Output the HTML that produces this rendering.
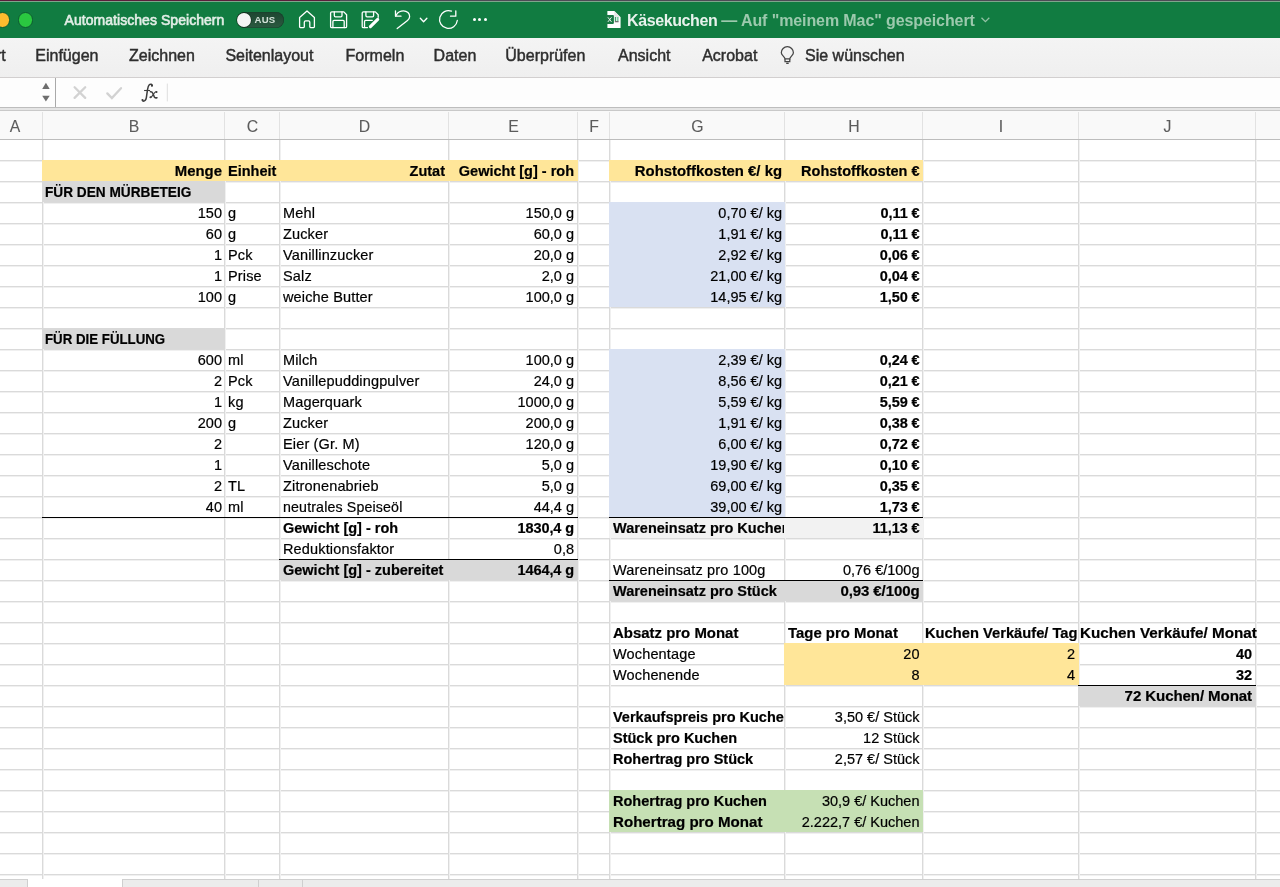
<!DOCTYPE html>
<html><head><meta charset="utf-8"><title>Käsekuchen</title>
<style>
*{box-sizing:border-box}
html,body{margin:0;padding:0}
body{width:1280px;height:887px;overflow:hidden;position:relative;background:#fff;font-family:"Liberation Sans",sans-serif;color:#000;-webkit-font-smoothing:antialiased}
.a{position:absolute}
.t{position:absolute;white-space:nowrap;font-size:14.5px;line-height:20px;height:20px;overflow:hidden;-webkit-text-stroke:0.2px #000;letter-spacing:0.15px}
.b{font-weight:bold;letter-spacing:0}
.r{text-align:right}
.hl{position:absolute;height:1px}
.vl{position:absolute;width:1px}
.tab{position:absolute;top:44px;font-size:16px;line-height:24px;color:#2e2e2e;white-space:nowrap;-webkit-text-stroke:0.45px #2e2e2e}
.ch{position:absolute;top:114.6px;height:24px;line-height:24px;font-size:15.8px;color:#5c5c5c;text-align:center;-webkit-text-stroke:0.1px #5c5c5c}
</style></head><body>
<div style="position:absolute;left:0;top:0;width:1280px;height:887px;overflow:hidden;will-change:transform">

<div class="a" style="left:0;top:0;width:1280px;height:38px;background:#117c41"></div>
<div class="a" style="left:0;top:0;width:340px;height:1px;background:#5a1f3a"></div>
<div class="a" style="left:340px;top:0;width:940px;height:1px;background:#4d4b55"></div>
<div class="a" style="left:0;top:1px;width:1280px;height:1px;background:#7fa58c"></div>
<div class="a" style="left:-5.4px;top:11.9px;width:15.8px;height:15.8px;border-radius:50%;background:#febc2e;border:1px solid #0d5a30"></div>
<div class="a" style="left:17.7px;top:11.9px;width:15.8px;height:15.8px;border-radius:50%;background:#2ac840;border:1px solid #0d5a30"></div>
<div class="a" style="left:64.5px;top:9.5px;font-size:14px;line-height:20px;color:#e3eee7;white-space:nowrap;letter-spacing:0.05px;-webkit-text-stroke:0.6px #e3eee7">Automatisches Speichern</div>
<div class="a" style="left:236.5px;top:12.2px;width:47.3px;height:15.6px;border-radius:8px;background:linear-gradient(#1d4530,#2b5a40);box-shadow:inset 0 0 0 0.6px #16402a"></div>
<div class="a" style="left:236.8px;top:12.8px;width:14.2px;height:14.2px;border-radius:50%;background:#f4f4f4;box-shadow:0 0 0 0.7px rgba(10,40,20,.8)"></div>
<div class="a" style="left:254.6px;top:12.8px;font-size:9.6px;line-height:14px;font-weight:bold;color:#d3e2d8;white-space:nowrap;letter-spacing:0.15px">AUS</div>
<svg class="a" style="left:290px;top:5px" width="210" height="30" viewBox="290 5 210 30" fill="none" stroke="#fff" stroke-width="1.3" stroke-linejoin="round" stroke-linecap="round">
<path d="M299.6 26.8 V17.6 L307 10.9 L314.4 17.6 V26.8 Q314.4 27.6 313.6 27.6 H310.6 Q309.8 27.6 309.8 26.8 V22.2 Q309.8 20.9 308.5 20.9 H305.6 Q304.3 20.9 304.3 22.2 V26.8 Q304.3 27.6 303.5 27.6 H300.4 Q299.6 27.6 299.6 26.8 Z"/>
<path d="M331.8 11.9 H343.8 L346.6 14.7 V26.4 Q346.6 27.6 345.4 27.6 H331.8 Q330.6 27.6 330.6 26.4 V13.1 Q330.6 11.9 331.8 11.9 Z"/>
<path d="M334.3 11.9 V15.6 Q334.3 16.8 335.5 16.8 H340.8 Q342 16.8 342 15.6 V11.9"/>
<path d="M332.9 27.6 V21.4 Q332.9 20.3 334 20.3 H343.1 Q344.2 20.3 344.2 21.4 V27.6"/>
<path d="M367.5 27.6 H363.4 Q362.2 27.6 362.2 26.4 V13.1 Q362.2 11.9 363.4 11.9 H375.4 L378.2 14.7 V17.3"/>
<path d="M365.9 11.9 V15.6 Q365.9 16.8 367.1 16.8 H372.4 Q373.6 16.8 373.6 15.6 V11.9"/>
<path d="M364.5 27.6 V21.4 Q364.5 20.3 365.6 20.3 H372.3"/>
<path d="M370.4 26.7 L377.7 19.4" stroke-width="3.1"/>
<path d="M395.5 10.8 V16.2 H401"/>
<path d="M395.7 16 C398 10.5 404.5 9.5 408 12.5 C410.5 15 410 18.5 407.5 20.5 L397.2 28.5"/>
<path d="M420.3 18.2 L423.6 21.8 L426.9 18.2"/>
<path d="M457.3 20.5 A8.9 8.9 0 1 1 451.5 11.1"/>
<path d="M455.8 10.8 V16.2 H450.5"/>
</svg>
<div class="a" style="left:472.5px;top:18.2px;width:3.2px;height:3.2px;border-radius:50%;background:#fff"></div>
<div class="a" style="left:478.3px;top:18.2px;width:3.2px;height:3.2px;border-radius:50%;background:#fff"></div>
<div class="a" style="left:484px;top:18.2px;width:3.2px;height:3.2px;border-radius:50%;background:#fff"></div>
<svg class="a" style="left:604px;top:9px" width="20" height="22" viewBox="604 9 20 22">
<path d="M607.4 11.1 H614.3 L620.6 17.2 V28 H607.4 Z" fill="#fff"/>
<path d="M614.3 11.1 V17.2 H620.6" fill="#e6e6e6"/>
<rect x="605.6" y="15.1" width="8.3" height="8.8" rx="0.8" fill="#1a7a45"/>
<path d="M607.9 17.3 L611.5 21.9 M611.5 17.3 L607.9 21.9" stroke="#e8f3ec" stroke-width="1"/>
<rect x="614.8" y="17" width="1.4" height="4" fill="#3fa36d"/><rect x="617" y="17" width="1.6" height="4" fill="#7ccaa0"/>
<rect x="614.8" y="21.3" width="3.8" height="0.9" fill="#333"/>
</svg>
<div class="a" style="left:627px;top:9.7px;font-size:16px;line-height:22px;font-weight:bold;color:#e8f2ec;white-space:nowrap;letter-spacing:-0.4px">Käsekuchen <span style="color:#9cc9ad;letter-spacing:-0.1px">— Auf "meinem Mac" gespeichert</span></div>
<svg class="a" style="left:976px;top:15px" width="16" height="10" viewBox="0 0 16 10" fill="none" stroke="#93c2a5" stroke-width="1.3"><path d="M5.5 2.8 L9.4 6.7 L13.3 2.8"/></svg>
<div class="a" style="left:0;top:38px;width:1280px;height:39px;background:linear-gradient(#f4f4f4,#efefef)"></div>
<div class="a" style="left:0;top:77px;width:1280px;height:1px;background:#d2cfcf"></div>
<div class="tab" style="left:-4px">rt</div>
<div class="tab" style="left:35.3px">Einfügen</div>
<div class="tab" style="left:129px">Zeichnen</div>
<div class="tab" style="left:225.4px">Seitenlayout</div>
<div class="tab" style="left:345.6px">Formeln</div>
<div class="tab" style="left:433.6px">Daten</div>
<div class="tab" style="left:505.3px">Überprüfen</div>
<div class="tab" style="left:618px">Ansicht</div>
<div class="tab" style="left:702.2px">Acrobat</div>
<div class="tab" style="left:805px">Sie wünschen</div>
<svg class="a" style="left:778px;top:46px" width="18" height="20" viewBox="778 46 18 20" fill="none" stroke="#444" stroke-width="1.25">
<path d="M785 58.9 C785 56.8 781.3 55.3 781.3 52.8 A6.05 6.05 0 0 1 793.4 52.8 C793.4 55.3 789.8 56.8 789.8 58.9 Z"/>
<path d="M785 58.9 V61.5 H789.8 V58.9"/>
<path d="M786.2 63.3 H788.7" stroke-width="1.4"/>
</svg>
<div class="a" style="left:0;top:78px;width:1280px;height:29px;background:#fdfdfd"></div>
<div class="a" style="left:55px;top:78px;width:1px;height:29px;background:#a9a9a9"></div>
<svg class="a" style="left:38px;top:80px" width="16" height="24" viewBox="38 80 16 24"><path d="M42.2 88.9 L45.9 82.8 L49.7 88.9 Z" fill="#6e6e6e"/><path d="M42.2 95.8 L49.7 95.8 L45.9 101.6 Z" fill="#6e6e6e"/></svg>
<svg class="a" style="left:70px;top:80px" width="100" height="24" viewBox="70 80 100 24" fill="none" stroke-linecap="round">
<path d="M74.6 87.3 L85.2 97.9 M85.2 87.3 L74.6 97.9" stroke="#d2d2d2" stroke-width="2.3"/>
<path d="M107.3 93.4 L111.9 98 L121 88.2" stroke="#d2d2d2" stroke-width="2.3"/>
<line x1="167.3" y1="84" x2="167.3" y2="101" stroke="#dedede" stroke-width="1"/>
</svg>
<svg class="a" style="left:136px;top:80px" width="28" height="24" viewBox="136 80 28 24" fill="none" stroke="#3d3d3d" stroke-linecap="round">
<path d="M152.3 85.6 C152.2 84.2 150.6 83.8 149.4 84.6 C148.3 85.4 147.9 87.2 147.5 89.6 L146.4 97.4 C146 100 144.7 101.3 142.9 101.1" stroke-width="1.5"/>
<circle cx="151.9" cy="85.8" r="1.05" fill="#3d3d3d" stroke="none"/>
<circle cx="142.5" cy="100.1" r="1.1" fill="#3d3d3d" stroke="none"/>
<path d="M144.1 90.5 H150.1" stroke-width="1.1" stroke-linecap="butt"/>
<path d="M150.4 91.7 C151.7 91.4 152.3 92.1 152.8 93.3 L154.3 96.9 C154.7 97.8 155.6 98.1 157 97.7" stroke-width="1.5"/>
<path d="M156.6 91.9 C155.8 91.6 155.1 92.1 154.4 93 L151.9 96.4 C151.4 97.1 150.8 97.5 150.3 97.3" stroke-width="1.1"/>
<circle cx="156.5" cy="92" r="1" fill="#3d3d3d" stroke="none"/>
<circle cx="150.5" cy="97.2" r="1" fill="#3d3d3d" stroke="none"/>
</svg>
<div class="a" style="left:0;top:107px;width:1280px;height:4px;background:#e5e5e5;border-top:1px solid #bdbdbd;border-bottom:1px solid #c9c9c9"></div>
<div class="a" style="left:0;top:111px;width:1280px;height:28px;background:#f9f9f9"></div>
<div class="a" style="left:0;top:139px;width:1280px;height:1px;background:#bdbdbd"></div>
<div class="a" style="left:42px;top:112px;width:1px;height:27px;background:#e2e2e2"></div>
<div class="ch" style="left:0px;width:30px">A</div>
<div class="a" style="left:224px;top:112px;width:1px;height:27px;background:#e2e2e2"></div>
<div class="ch" style="left:43px;width:182px">B</div>
<div class="a" style="left:279px;top:112px;width:1px;height:27px;background:#e2e2e2"></div>
<div class="ch" style="left:225px;width:55px">C</div>
<div class="a" style="left:448px;top:112px;width:1px;height:27px;background:#e2e2e2"></div>
<div class="ch" style="left:280px;width:169px">D</div>
<div class="a" style="left:577px;top:112px;width:1px;height:27px;background:#e2e2e2"></div>
<div class="ch" style="left:449px;width:129px">E</div>
<div class="a" style="left:609px;top:112px;width:1px;height:27px;background:#e2e2e2"></div>
<div class="ch" style="left:578px;width:32px">F</div>
<div class="a" style="left:784px;top:112px;width:1px;height:27px;background:#e2e2e2"></div>
<div class="ch" style="left:610px;width:175px">G</div>
<div class="a" style="left:922px;top:112px;width:1px;height:27px;background:#e2e2e2"></div>
<div class="ch" style="left:785px;width:138px">H</div>
<div class="a" style="left:1078px;top:112px;width:1px;height:27px;background:#e2e2e2"></div>
<div class="ch" style="left:923px;width:156px">I</div>
<div class="a" style="left:1255px;top:112px;width:1px;height:27px;background:#e2e2e2"></div>
<div class="ch" style="left:1079px;width:177px">J</div>
<div class="hl" style="left:0;top:160px;width:1280px;background:#dadada;box-shadow:0 1px 0 #f0f0f0"></div>
<div class="hl" style="left:0;top:181px;width:1280px;background:#dadada;box-shadow:0 1px 0 #f0f0f0"></div>
<div class="hl" style="left:0;top:202px;width:1280px;background:#dadada;box-shadow:0 1px 0 #f0f0f0"></div>
<div class="hl" style="left:0;top:223px;width:1280px;background:#dadada;box-shadow:0 1px 0 #f0f0f0"></div>
<div class="hl" style="left:0;top:244px;width:1280px;background:#dadada;box-shadow:0 1px 0 #f0f0f0"></div>
<div class="hl" style="left:0;top:265px;width:1280px;background:#dadada;box-shadow:0 1px 0 #f0f0f0"></div>
<div class="hl" style="left:0;top:286px;width:1280px;background:#dadada;box-shadow:0 1px 0 #f0f0f0"></div>
<div class="hl" style="left:0;top:307px;width:1280px;background:#dadada;box-shadow:0 1px 0 #f0f0f0"></div>
<div class="hl" style="left:0;top:328px;width:1280px;background:#dadada;box-shadow:0 1px 0 #f0f0f0"></div>
<div class="hl" style="left:0;top:349px;width:1280px;background:#dadada;box-shadow:0 1px 0 #f0f0f0"></div>
<div class="hl" style="left:0;top:370px;width:1280px;background:#dadada;box-shadow:0 1px 0 #f0f0f0"></div>
<div class="hl" style="left:0;top:391px;width:1280px;background:#dadada;box-shadow:0 1px 0 #f0f0f0"></div>
<div class="hl" style="left:0;top:412px;width:1280px;background:#dadada;box-shadow:0 1px 0 #f0f0f0"></div>
<div class="hl" style="left:0;top:433px;width:1280px;background:#dadada;box-shadow:0 1px 0 #f0f0f0"></div>
<div class="hl" style="left:0;top:454px;width:1280px;background:#dadada;box-shadow:0 1px 0 #f0f0f0"></div>
<div class="hl" style="left:0;top:475px;width:1280px;background:#dadada;box-shadow:0 1px 0 #f0f0f0"></div>
<div class="hl" style="left:0;top:496px;width:1280px;background:#dadada;box-shadow:0 1px 0 #f0f0f0"></div>
<div class="hl" style="left:0;top:517px;width:1280px;background:#dadada;box-shadow:0 1px 0 #f0f0f0"></div>
<div class="hl" style="left:0;top:538px;width:1280px;background:#dadada;box-shadow:0 1px 0 #f0f0f0"></div>
<div class="hl" style="left:0;top:559px;width:1280px;background:#dadada;box-shadow:0 1px 0 #f0f0f0"></div>
<div class="hl" style="left:0;top:580px;width:1280px;background:#dadada;box-shadow:0 1px 0 #f0f0f0"></div>
<div class="hl" style="left:0;top:601px;width:1280px;background:#dadada;box-shadow:0 1px 0 #f0f0f0"></div>
<div class="hl" style="left:0;top:622px;width:1280px;background:#dadada;box-shadow:0 1px 0 #f0f0f0"></div>
<div class="hl" style="left:0;top:643px;width:1280px;background:#dadada;box-shadow:0 1px 0 #f0f0f0"></div>
<div class="hl" style="left:0;top:664px;width:1280px;background:#dadada;box-shadow:0 1px 0 #f0f0f0"></div>
<div class="hl" style="left:0;top:685px;width:1280px;background:#dadada;box-shadow:0 1px 0 #f0f0f0"></div>
<div class="hl" style="left:0;top:706px;width:1280px;background:#dadada;box-shadow:0 1px 0 #f0f0f0"></div>
<div class="hl" style="left:0;top:727px;width:1280px;background:#dadada;box-shadow:0 1px 0 #f0f0f0"></div>
<div class="hl" style="left:0;top:748px;width:1280px;background:#dadada;box-shadow:0 1px 0 #f0f0f0"></div>
<div class="hl" style="left:0;top:769px;width:1280px;background:#dadada;box-shadow:0 1px 0 #f0f0f0"></div>
<div class="hl" style="left:0;top:790px;width:1280px;background:#dadada;box-shadow:0 1px 0 #f0f0f0"></div>
<div class="hl" style="left:0;top:811px;width:1280px;background:#dadada;box-shadow:0 1px 0 #f0f0f0"></div>
<div class="hl" style="left:0;top:832px;width:1280px;background:#dadada;box-shadow:0 1px 0 #f0f0f0"></div>
<div class="hl" style="left:0;top:853px;width:1280px;background:#dadada;box-shadow:0 1px 0 #f0f0f0"></div>
<div class="hl" style="left:0;top:874px;width:1280px;background:#dadada;box-shadow:0 1px 0 #f0f0f0"></div>
<div class="vl" style="left:42px;top:140px;height:739px;background:#dadada;box-shadow:1px 0 0 #f0f0f0"></div>
<div class="vl" style="left:224px;top:140px;height:739px;background:#dadada;box-shadow:1px 0 0 #f0f0f0"></div>
<div class="vl" style="left:279px;top:140px;height:739px;background:#dadada;box-shadow:1px 0 0 #f0f0f0"></div>
<div class="vl" style="left:448px;top:140px;height:739px;background:#dadada;box-shadow:1px 0 0 #f0f0f0"></div>
<div class="vl" style="left:577px;top:140px;height:739px;background:#dadada;box-shadow:1px 0 0 #f0f0f0"></div>
<div class="vl" style="left:609px;top:140px;height:739px;background:#dadada;box-shadow:1px 0 0 #f0f0f0"></div>
<div class="vl" style="left:784px;top:140px;height:739px;background:#dadada;box-shadow:1px 0 0 #f0f0f0"></div>
<div class="vl" style="left:922px;top:140px;height:739px;background:#dadada;box-shadow:1px 0 0 #f0f0f0"></div>
<div class="vl" style="left:1078px;top:140px;height:739px;background:#dadada;box-shadow:1px 0 0 #f0f0f0"></div>
<div class="vl" style="left:1255px;top:140px;height:739px;background:#dadada;box-shadow:1px 0 0 #f0f0f0"></div>
<div class="a" style="left:42px;top:160px;width:536px;height:21px;background:#ffe699"></div>
<div class="a" style="left:609px;top:160px;width:314px;height:21px;background:#ffe699"></div>
<div class="a" style="left:42px;top:181px;width:183px;height:21px;background:#d9d9d9"></div>
<div class="a" style="left:42px;top:328px;width:183px;height:21px;background:#d9d9d9"></div>
<div class="a" style="left:609px;top:202px;width:176px;height:105px;background:#d9e1f2"></div>
<div class="a" style="left:609px;top:349px;width:176px;height:168px;background:#d9e1f2"></div>
<div class="a" style="left:609px;top:517px;width:314px;height:21px;background:#f2f2f2"></div>
<div class="a" style="left:279px;top:559px;width:299px;height:21px;background:#d9d9d9"></div>
<div class="a" style="left:609px;top:580px;width:314px;height:21px;background:#d9d9d9"></div>
<div class="a" style="left:784px;top:643px;width:295px;height:42px;background:#ffe699"></div>
<div class="a" style="left:1078px;top:685px;width:178px;height:21px;background:#d9d9d9"></div>
<div class="a" style="left:609px;top:790px;width:314px;height:42px;background:#c6e0b4"></div>
<div class="hl" style="left:42px;top:517px;width:536px;background:#000"></div>
<div class="hl" style="left:609px;top:517px;width:314px;background:#000"></div>
<div class="hl" style="left:279px;top:559px;width:299px;background:#000"></div>
<div class="hl" style="left:609px;top:580px;width:314px;background:#000"></div>
<div class="hl" style="left:1078px;top:685px;width:178px;background:#000"></div>
<div class="t b r" style="left:43px;width:179px;top:161px;transform:scaleX(1.0270);transform-origin:100% 0">Menge</div>
<div class="t b" style="left:228px;width:400px;top:161px">Einheit</div>
<div class="t b r" style="left:280px;width:165px;top:161px">Zutat</div>
<div class="t b r" style="left:449px;width:125px;top:161px">Gewicht [g] - roh</div>
<div class="t b r" style="left:610px;width:172px;top:161px;transform:scaleX(1.0260);transform-origin:100% 0">Rohstoffkosten €/ kg</div>
<div class="t b r" style="left:785px;width:134.5px;top:161px">Rohstoffkosten €</div>
<div class="t b" style="left:45px;width:400.00px;top:182px;transform:scaleX(0.9416);transform-origin:0 0">FÜR DEN MÜRBETEIG</div>
<div class="t r" style="left:43px;width:179px;top:203px;letter-spacing:0px">150</div>
<div class="t" style="left:228px;width:400px;top:203px">g</div>
<div class="t" style="left:283px;width:400px;top:203px">Mehl</div>
<div class="t r" style="left:449px;width:125px;top:203px;letter-spacing:0px">150,0 g</div>
<div class="t r" style="left:610px;width:172px;top:203px;letter-spacing:0px">0,70 €/ kg</div>
<div class="t b r" style="left:785px;width:134.5px;top:203px;letter-spacing:-0.1px">0,11 €</div>
<div class="t r" style="left:43px;width:179px;top:224px;letter-spacing:0px">60</div>
<div class="t" style="left:228px;width:400px;top:224px">g</div>
<div class="t" style="left:283px;width:400px;top:224px">Zucker</div>
<div class="t r" style="left:449px;width:125px;top:224px;letter-spacing:0px">60,0 g</div>
<div class="t r" style="left:610px;width:172px;top:224px;letter-spacing:0px">1,91 €/ kg</div>
<div class="t b r" style="left:785px;width:134.5px;top:224px;letter-spacing:-0.1px">0,11 €</div>
<div class="t r" style="left:43px;width:179px;top:245px;letter-spacing:0px">1</div>
<div class="t" style="left:228px;width:400px;top:245px">Pck</div>
<div class="t" style="left:283px;width:400px;top:245px">Vanillinzucker</div>
<div class="t r" style="left:449px;width:125px;top:245px;letter-spacing:0px">20,0 g</div>
<div class="t r" style="left:610px;width:172px;top:245px;letter-spacing:0px">2,92 €/ kg</div>
<div class="t b r" style="left:785px;width:134.5px;top:245px;letter-spacing:-0.1px">0,06 €</div>
<div class="t r" style="left:43px;width:179px;top:266px;letter-spacing:0px">1</div>
<div class="t" style="left:228px;width:400px;top:266px">Prise</div>
<div class="t" style="left:283px;width:400px;top:266px">Salz</div>
<div class="t r" style="left:449px;width:125px;top:266px;letter-spacing:0px">2,0 g</div>
<div class="t r" style="left:610px;width:172px;top:266px;letter-spacing:0px">21,00 €/ kg</div>
<div class="t b r" style="left:785px;width:134.5px;top:266px;letter-spacing:-0.1px">0,04 €</div>
<div class="t r" style="left:43px;width:179px;top:287px;letter-spacing:0px">100</div>
<div class="t" style="left:228px;width:400px;top:287px">g</div>
<div class="t" style="left:283px;width:400px;top:287px">weiche Butter</div>
<div class="t r" style="left:449px;width:125px;top:287px;letter-spacing:0px">100,0 g</div>
<div class="t r" style="left:610px;width:172px;top:287px;letter-spacing:0px">14,95 €/ kg</div>
<div class="t b r" style="left:785px;width:134.5px;top:287px;letter-spacing:-0.1px">1,50 €</div>
<div class="t b" style="left:45px;width:400.00px;top:329px;transform:scaleX(0.9154);transform-origin:0 0">FÜR DIE FÜLLUNG</div>
<div class="t r" style="left:43px;width:179px;top:350px;letter-spacing:0px">600</div>
<div class="t" style="left:228px;width:400px;top:350px">ml</div>
<div class="t" style="left:283px;width:400px;top:350px">Milch</div>
<div class="t r" style="left:449px;width:125px;top:350px;letter-spacing:0px">100,0 g</div>
<div class="t r" style="left:610px;width:172px;top:350px;letter-spacing:0px">2,39 €/ kg</div>
<div class="t b r" style="left:785px;width:134.5px;top:350px;letter-spacing:-0.1px">0,24 €</div>
<div class="t r" style="left:43px;width:179px;top:371px;letter-spacing:0px">2</div>
<div class="t" style="left:228px;width:400px;top:371px">Pck</div>
<div class="t" style="left:283px;width:400px;top:371px">Vanillepuddingpulver</div>
<div class="t r" style="left:449px;width:125px;top:371px;letter-spacing:0px">24,0 g</div>
<div class="t r" style="left:610px;width:172px;top:371px;letter-spacing:0px">8,56 €/ kg</div>
<div class="t b r" style="left:785px;width:134.5px;top:371px;letter-spacing:-0.1px">0,21 €</div>
<div class="t r" style="left:43px;width:179px;top:392px;letter-spacing:0px">1</div>
<div class="t" style="left:228px;width:400px;top:392px">kg</div>
<div class="t" style="left:283px;width:400px;top:392px">Magerquark</div>
<div class="t r" style="left:449px;width:125px;top:392px;letter-spacing:0px">1000,0 g</div>
<div class="t r" style="left:610px;width:172px;top:392px;letter-spacing:0px">5,59 €/ kg</div>
<div class="t b r" style="left:785px;width:134.5px;top:392px;letter-spacing:-0.1px">5,59 €</div>
<div class="t r" style="left:43px;width:179px;top:413px;letter-spacing:0px">200</div>
<div class="t" style="left:228px;width:400px;top:413px">g</div>
<div class="t" style="left:283px;width:400px;top:413px">Zucker</div>
<div class="t r" style="left:449px;width:125px;top:413px;letter-spacing:0px">200,0 g</div>
<div class="t r" style="left:610px;width:172px;top:413px;letter-spacing:0px">1,91 €/ kg</div>
<div class="t b r" style="left:785px;width:134.5px;top:413px;letter-spacing:-0.1px">0,38 €</div>
<div class="t r" style="left:43px;width:179px;top:434px;letter-spacing:0px">2</div>
<div class="t" style="left:283px;width:400px;top:434px">Eier (Gr. M)</div>
<div class="t r" style="left:449px;width:125px;top:434px;letter-spacing:0px">120,0 g</div>
<div class="t r" style="left:610px;width:172px;top:434px;letter-spacing:0px">6,00 €/ kg</div>
<div class="t b r" style="left:785px;width:134.5px;top:434px;letter-spacing:-0.1px">0,72 €</div>
<div class="t r" style="left:43px;width:179px;top:455px;letter-spacing:0px">1</div>
<div class="t" style="left:283px;width:400px;top:455px">Vanilleschote</div>
<div class="t r" style="left:449px;width:125px;top:455px;letter-spacing:0px">5,0 g</div>
<div class="t r" style="left:610px;width:172px;top:455px;letter-spacing:0px">19,90 €/ kg</div>
<div class="t b r" style="left:785px;width:134.5px;top:455px;letter-spacing:-0.1px">0,10 €</div>
<div class="t r" style="left:43px;width:179px;top:476px;letter-spacing:0px">2</div>
<div class="t" style="left:228px;width:400px;top:476px">TL</div>
<div class="t" style="left:283px;width:400px;top:476px">Zitronenabrieb</div>
<div class="t r" style="left:449px;width:125px;top:476px;letter-spacing:0px">5,0 g</div>
<div class="t r" style="left:610px;width:172px;top:476px;letter-spacing:0px">69,00 €/ kg</div>
<div class="t b r" style="left:785px;width:134.5px;top:476px;letter-spacing:-0.1px">0,35 €</div>
<div class="t r" style="left:43px;width:179px;top:497px;letter-spacing:0px">40</div>
<div class="t" style="left:228px;width:400px;top:497px">ml</div>
<div class="t" style="left:283px;width:400.00px;top:497px;transform:scaleX(0.9790);transform-origin:0 0">neutrales Speiseöl</div>
<div class="t r" style="left:449px;width:125px;top:497px;letter-spacing:0px">44,4 g</div>
<div class="t r" style="left:610px;width:172px;top:497px;letter-spacing:0px">39,00 €/ kg</div>
<div class="t b r" style="left:785px;width:134.5px;top:497px;letter-spacing:-0.1px">1,73 €</div>
<div class="t b" style="left:283px;width:400px;top:518px">Gewicht [g] - roh</div>
<div class="t b r" style="left:449px;width:125px;top:518px;letter-spacing:-0.1px">1830,4 g</div>
<div class="t b" style="left:613px;width:171px;top:518px">Wareneinsatz pro Kuchen</div>
<div class="t b r" style="left:785px;width:134.5px;top:518px;letter-spacing:-0.1px">11,13 €</div>
<div class="t" style="left:283px;width:400px;top:539px">Reduktionsfaktor</div>
<div class="t r" style="left:449px;width:125px;top:539px;letter-spacing:0px">0,8</div>
<div class="t b" style="left:283px;width:400px;top:560px">Gewicht [g] - zubereitet</div>
<div class="t b r" style="left:449px;width:125px;top:560px;letter-spacing:-0.1px">1464,4 g</div>
<div class="t" style="left:613px;width:400px;top:560px">Wareneinsatz pro 100g</div>
<div class="t r" style="left:785px;width:134.5px;top:560px;letter-spacing:0px">0,76 €/100g</div>
<div class="t b" style="left:613px;width:400px;top:581px">Wareneinsatz pro Stück</div>
<div class="t b r" style="left:785px;width:134.5px;top:581px;transform:scaleX(1.0360);transform-origin:100% 0;letter-spacing:-0.1px">0,93 €/100g</div>
<div class="t b" style="left:613px;width:400.00px;top:623px;transform:scaleX(1.0310);transform-origin:0 0">Absatz pro Monat</div>
<div class="t b" style="left:788px;width:400.00px;top:623px;transform:scaleX(1.0280);transform-origin:0 0">Tage pro Monat</div>
<div class="t b" style="left:925px;width:149.90px;top:623px;transform:scaleX(1.0140);transform-origin:0 0">Kuchen Verkäufe/ Tag</div>
<div class="t b" style="left:1079.5px;width:400.00px;top:623px;transform:scaleX(1.0500);transform-origin:0 0">Kuchen Verkäufe/ Monat</div>
<div class="t" style="left:613px;width:400px;top:644px">Wochentage</div>
<div class="t r" style="left:785px;width:134.5px;top:644px;letter-spacing:0px">20</div>
<div class="t r" style="left:923px;width:152px;top:644px;letter-spacing:0px">2</div>
<div class="t b r" style="left:1079px;width:173px;top:644px;letter-spacing:-0.1px">40</div>
<div class="t" style="left:613px;width:400px;top:665px">Wochenende</div>
<div class="t r" style="left:785px;width:134.5px;top:665px;letter-spacing:0px">8</div>
<div class="t r" style="left:923px;width:152px;top:665px;letter-spacing:0px">4</div>
<div class="t b r" style="left:1079px;width:173px;top:665px;letter-spacing:-0.1px">32</div>
<div class="t b r" style="left:1079px;width:173px;top:686px;transform:scaleX(1.0400);transform-origin:100% 0;letter-spacing:-0.1px">72 Kuchen/ Monat</div>
<div class="t b" style="left:613px;width:171px;top:707px">Verkaufspreis pro Kuchen</div>
<div class="t r" style="left:785px;width:134.5px;top:707px;letter-spacing:0px">3,50 €/ Stück</div>
<div class="t b" style="left:613px;width:400px;top:728px">Stück pro Kuchen</div>
<div class="t r" style="left:785px;width:134.5px;top:728px;letter-spacing:0px">12 Stück</div>
<div class="t b" style="left:613px;width:400px;top:749px">Rohertrag pro Stück</div>
<div class="t r" style="left:785px;width:134.5px;top:749px;letter-spacing:0px">2,57 €/ Stück</div>
<div class="t b" style="left:613px;width:400px;top:791px">Rohertrag pro Kuchen</div>
<div class="t r" style="left:785px;width:134.5px;top:791px;letter-spacing:0px">30,9 €/ Kuchen</div>
<div class="t b" style="left:613px;width:400.00px;top:812px;transform:scaleX(1.0420);transform-origin:0 0">Rohertrag pro Monat</div>
<div class="t r" style="left:785px;width:134.5px;top:812px;letter-spacing:0px">2.222,7 €/ Kuchen</div>
<div class="a" style="left:0;top:879px;width:1280px;height:8px;background:#ececec;border-top:1px solid #d0d0d0"></div>
<div class="a" style="left:27px;top:879px;width:95px;height:8px;background:#fff"></div>
<div class="a" style="left:27px;top:879px;width:1px;height:8px;background:#cfcfcf"></div>
<div class="a" style="left:122px;top:879px;width:1px;height:8px;background:#cfcfcf"></div>
<div class="a" style="left:258px;top:880px;width:1px;height:7px;background:#cfcfcf"></div>
<div class="a" style="left:302px;top:880px;width:1px;height:7px;background:#cfcfcf"></div>
</div></body></html>
